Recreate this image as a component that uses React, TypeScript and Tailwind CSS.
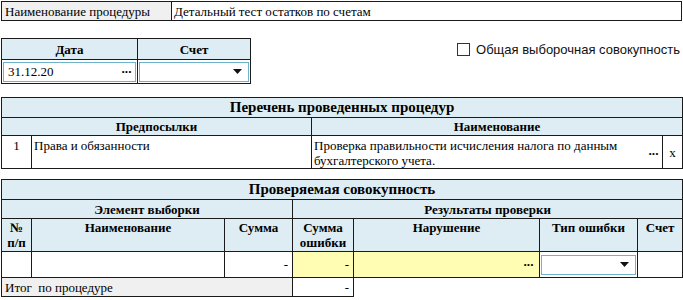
import React from 'react';

const cell = 'border border-[#1a1a1a] p-0';
const head = 'bg-[#deedf3] font-bold';

function Dots() {
  return <span className="font-bold tracking-[-1px] leading-none">···</span>;
}

function Caret() {
  return (
    <svg width="9" height="5" viewBox="0 0 9 5" className="block">
      <path d="M0 0h9L4.5 5z" fill="#111" />
    </svg>
  );
}

export default function App() {
  return (
    <div className="font-[Liberation_Serif,Times_New_Roman,serif] w-[683px] h-[300px] overflow-hidden bg-white text-[13px] text-black leading-[15px]">
      {/* Procedure name */}
      <div className="ml-[1px] mt-[1px] flex h-[20px] w-[681px] border border-[#1a1a1a]">
        <div className="flex w-[170px] items-center border-r border-[#1a1a1a] bg-[#f0f0f0] pl-[3px]">
          Наименование процедуры
        </div>
        <div className="flex items-center pl-[2px]">Детальный тест остатков по счетам</div>
      </div>

      {/* Date / account + checkbox */}
      <div className="mt-[17px] flex items-start justify-between">
        <table className="ml-[1px] w-[249px] table-fixed border-collapse">
          <colgroup>
            <col className="w-[136px]" />
            <col className="w-[113px]" />
          </colgroup>
          <tbody>
            <tr className="h-[21px]">
              <td className={`${cell} ${head} text-center`}>Дата</td>
              <td className={`${cell} ${head} text-center`}>Счет</td>
            </tr>
            <tr className="h-[24px]">
              <td className={`${cell} px-[1px]`}>
                <div className="flex h-[20px] items-center justify-between border border-[#6fb3cb] pl-[4px] pr-[4px]">
                  <span>31.12.20</span>
                  <Dots />
                </div>
              </td>
              <td className={`${cell} px-[1px]`}>
                <div className="flex h-[20px] items-center justify-end border border-[#6fb3cb] pr-[6px]">
                  <Caret />
                </div>
              </td>
            </tr>
          </tbody>
        </table>
        <label className="mr-[3px] mt-[4px] flex items-center gap-[6px] font-[Liberation_Sans,Arial,sans-serif] text-[13px] text-[#111]">
          <span className="block h-[13px] w-[13px] border border-[#333] bg-white" />
          Общая выборочная совокупность
        </label>
      </div>

      {/* Procedures list */}
      <table className="ml-[1px] mt-[13px] w-[681px] table-fixed border-collapse">
        <colgroup>
          <col className="w-[30px]" />
          <col className="w-[280px]" />
          <col className="w-[351px]" />
          <col className="w-[20px]" />
        </colgroup>
        <tbody>
          <tr className="h-[20px]">
            <td colSpan={4} className={`${cell} ${head} text-center text-[15px]`}>
              Перечень проведенных процедур
            </td>
          </tr>
          <tr className="h-[18px]">
            <td colSpan={2} className={`${cell} ${head} text-center`}>Предпосылки</td>
            <td colSpan={2} className={`${cell} ${head} text-center`}>Наименование</td>
          </tr>
          <tr className="h-[33px]">
            <td className={`${cell} pt-[2px] text-center align-top`}>1</td>
            <td className={`${cell} pl-[2px] pt-[2px] align-top`}>Права и обязанности</td>
            <td className={`${cell} pl-[2px] pt-[2px] align-top`}>
              <div className="flex items-center justify-between pr-[4px]">
                <span className="w-[318px]">
                  Проверка правильности исчисления налога по данным бухгалтерского учета.
                </span>
                <Dots />
              </div>
            </td>
            <td className={`${cell} text-center`}>x</td>
          </tr>
        </tbody>
      </table>

      {/* Checked population */}
      <table className="ml-[1px] mt-[10px] w-[681px] table-fixed border-collapse">
        <colgroup>
          <col className="w-[30px]" />
          <col className="w-[193px]" />
          <col className="w-[68px]" />
          <col className="w-[61px]" />
          <col className="w-[186px]" />
          <col className="w-[98px]" />
          <col className="w-[45px]" />
        </colgroup>
        <tbody>
          <tr className="h-[20px]">
            <td colSpan={7} className={`${cell} ${head} text-center text-[15px]`}>
              Проверяемая совокупность
            </td>
          </tr>
          <tr className="h-[19px]">
            <td colSpan={3} className={`${cell} ${head} text-center`}>Элемент выборки</td>
            <td colSpan={4} className={`${cell} ${head} text-center`}>Результаты проверки</td>
          </tr>
          <tr className="h-[33px]">
            <td className={`${cell} ${head} pt-[1px] text-center align-top`}>
              №<br />п/п
            </td>
            <td className={`${cell} ${head} pt-[1px] text-center align-top`}>Наименование</td>
            <td className={`${cell} ${head} pt-[1px] text-center align-top`}>Сумма</td>
            <td className={`${cell} ${head} pt-[1px] text-center align-top`}>
              Сумма<br />ошибки
            </td>
            <td className={`${cell} ${head} pt-[1px] text-center align-top`}>Нарушение</td>
            <td className={`${cell} ${head} pt-[1px] text-center align-top`}>Тип ошибки</td>
            <td className={`${cell} ${head} pt-[1px] text-center align-top`}>Счет</td>
          </tr>
          <tr className="h-[26px]">
            <td className={cell} />
            <td className={cell} />
            <td className={`${cell} pr-[4px] text-right`}>-</td>
            <td className={`${cell} bg-[#fffcb3] pr-[4px] text-right`}>-</td>
            <td className={`${cell} bg-[#fffcb3] pr-[6px] text-right`}>
              <Dots />
            </td>
            <td className={`${cell} px-[1px]`}>
              <div className="flex h-[20px] items-center justify-end border border-[#6fb3cb] pr-[6px]">
                <Caret />
              </div>
            </td>
            <td className={cell} />
          </tr>
          <tr className="h-[19px]">
            <td colSpan={3} className={`${cell} bg-[#f0f0f0] pl-[3px]`}>
              Итог&nbsp; по процедуре
            </td>
            <td className={`${cell} pr-[4px] text-right`}>-</td>
            <td colSpan={3} className="p-0" />
          </tr>
        </tbody>
      </table>
    </div>
  );
}
